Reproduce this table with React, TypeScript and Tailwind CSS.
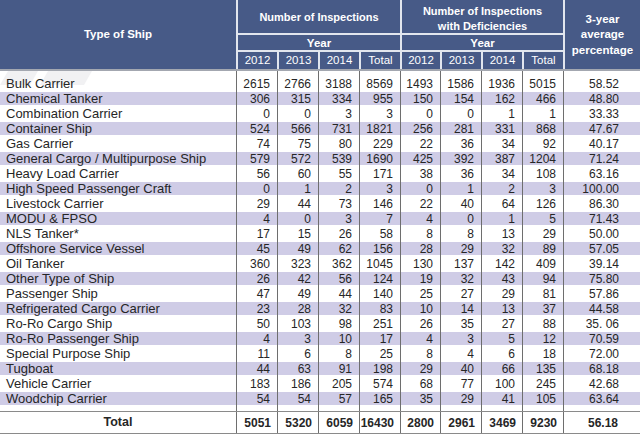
import React from "react";

const rows: [string, string, string, string, string, string, string, string, string, string][] = [
  ["Bulk Carrier", "2615", "2766", "3188", "8569", "1493", "1586", "1936", "5015", "58.52"],
  ["Chemical Tanker", "306", "315", "334", "955", "150", "154", "162", "466", "48.80"],
  ["Combination Carrier", "0", "0", "3", "3", "0", "0", "1", "1", "33.33"],
  ["Container Ship", "524", "566", "731", "1821", "256", "281", "331", "868", "47.67"],
  ["Gas Carrier", "74", "75", "80", "229", "22", "36", "34", "92", "40.17"],
  ["General Cargo / Multipurpose Ship", "579", "572", "539", "1690", "425", "392", "387", "1204", "71.24"],
  ["Heavy Load Carrier", "56", "60", "55", "171", "38", "36", "34", "108", "63.16"],
  ["High Speed Passenger Craft", "0", "1", "2", "3", "0", "1", "2", "3", "100.00"],
  ["Livestock Carrier", "29", "44", "73", "146", "22", "40", "64", "126", "86.30"],
  ["MODU & FPSO", "4", "0", "3", "7", "4", "0", "1", "5", "71.43"],
  ["NLS Tanker*", "17", "15", "26", "58", "8", "8", "13", "29", "50.00"],
  ["Offshore Service Vessel", "45", "49", "62", "156", "28", "29", "32", "89", "57.05"],
  ["Oil Tanker", "360", "323", "362", "1045", "130", "137", "142", "409", "39.14"],
  ["Other Type of Ship", "26", "42", "56", "124", "19", "32", "43", "94", "75.80"],
  ["Passenger Ship", "47", "49", "44", "140", "25", "27", "29", "81", "57.86"],
  ["Refrigerated Cargo Carrier", "23", "28", "32", "83", "10", "14", "13", "37", "44.58"],
  ["Ro-Ro Cargo Ship", "50", "103", "98", "251", "26", "35", "27", "88", "35. 06"],
  ["Ro-Ro Passenger Ship", "4", "3", "10", "17", "4", "3", "5", "12", "70.59"],
  ["Special Purpose Ship", "11", "6", "8", "25", "8", "4", "6", "18", "72.00"],
  ["Tugboat", "44", "63", "91", "198", "29", "40", "66", "135", "68.18"],
  ["Vehicle Carrier", "183", "186", "205", "574", "68", "77", "100", "245", "42.68"],
  ["Woodchip Carrier", "54", "54", "57", "165", "35", "29", "41", "105", "63.64"],
];

const totals = ["5051", "5320", "6059", "16430", "2800", "2961", "3469", "9230", "56.18"];

const bodyCols =
  "grid grid-cols-[237px_41px_41px_41px_41px_40px_41px_41px_41px_76px]";

const hcell = "bg-[#475a87] text-white flex items-center justify-center text-center";

function SpacerRow({ h }: { h: string }) {
  return (
    <div className={`${bodyCols} ${h}`}>
      {Array.from({ length: 10 }).map((_, i) => (
        <div key={i} className={i < 9 ? "border-r border-[#6e6e6e]" : ""} />
      ))}
    </div>
  );
}

export default function App() {
  return (
    <div className="w-[640px] h-[435px] bg-white overflow-hidden font-['Liberation_Sans',Arial,sans-serif] text-[#262626]">
      {/* Header */}
      <div className="grid grid-cols-[236px_39px_39px_39px_39px_38px_39px_39px_39px_75px] grid-rows-[33px_15px_17px] gap-[2px] bg-[#e2e6ee]">
        <div className={`${hcell} row-span-3 font-bold text-[11.5px]`}>Type of Ship</div>
        <div className={`${hcell} col-span-4 font-bold text-[11px] pt-[1px]`}>Number of Inspections</div>
        <div className={`${hcell} col-span-4 font-bold text-[11px] leading-[14.5px] pt-[4px]`}>
          Number of Inspections
          <br />
          with Deficiencies
        </div>
        <div className={`${hcell} row-span-3 font-bold text-[11.5px] leading-[15.5px] pt-[1px]`}>
          3-year
          <br />
          average
          <br />
          percentage
        </div>
        <div className={`${hcell} col-span-4 font-bold text-[11.5px] pt-[2px]`}>Year</div>
        <div className={`${hcell} col-span-4 font-bold text-[11.5px] pt-[2px]`}>Year</div>
        {["2012", "2013", "2014", "Total", "2012", "2013", "2014", "Total"].map((y, i) => (
          <div key={i} className={`${hcell} text-[11.5px]`}>
            {y}
          </div>
        ))}
      </div>
      <div className="h-[2px] bg-[#a3a7b0]" />

      {/* Body */}
      <div className="relative">
        <svg className="absolute left-0 top-0 pointer-events-none" width="120" height="14">
          <polygon points="8,0 38,0 30,14 0,14" fill="#f1f1f3" />
          <polygon points="48,0 92,0 84,14 40,14" fill="#f1f1f3" />
        </svg>
        <div className="relative">
          <SpacerRow h="h-[5px]" />
          {rows.map((r, ri) => {
            const stripe = ri % 2 === 1;
            return (
              <div key={ri} className={`${bodyCols} h-[15px]`}>
                {r.map((c, ci) => (
                  <div
                    key={ci}
                    className={[
                      "flex items-center whitespace-nowrap leading-none",
                      ci < 9 ? "border-r border-[#6e6e6e]" : "",
                      stripe
                        ? "bg-[#cfcce6] shadow-[inset_0_1px_0_#ffffff,inset_0_-1px_0_#ffffff]"
                        : "",
                      ci === 0
                        ? "pl-[6px] text-[13px]"
                        : ci === 9
                        ? "justify-end pr-[21px] text-[12px]"
                        : "justify-end pr-[7px] text-[12px]",
                    ].join(" ")}
                  >
                    {c}
                  </div>
                ))}
              </div>
            );
          })}
          <SpacerRow h="h-[5px]" />
        </div>
      </div>

      {/* Total row */}
      <div className={`${bodyCols} h-[23px] border-y border-[#8a8a8a] font-bold`}>
        <div className="flex items-center justify-center border-r border-[#6e6e6e] text-[12.5px]">
          Total
        </div>
        {totals.map((t, i) => (
          <div
            key={i}
            className={[
              "flex items-center text-[12px]",
              i < 8 ? "justify-end pr-[6px] border-r border-[#6e6e6e]" : "justify-end pr-[22px]",
            ].join(" ")}
          >
            {t}
          </div>
        ))}
      </div>
    </div>
  );
}
